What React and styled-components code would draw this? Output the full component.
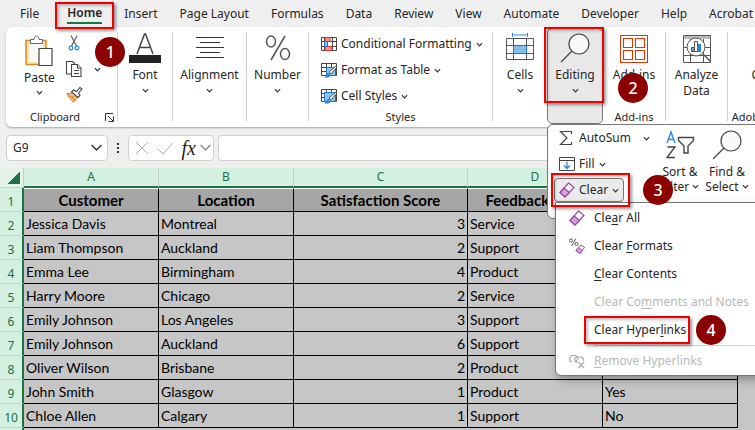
import React from "react";
import styled, { createGlobalStyle, css } from "styled-components";

const tabs = [
  "File",
  "Home",
  "Insert",
  "Page Layout",
  "Formulas",
  "Data",
  "Review",
  "View",
  "Automate",
  "Developer",
  "Help",
  "Acrobat",
];

const columns = [
  { letter: "A", title: "Customer", width: 135 },
  { letter: "B", title: "Location", width: 135 },
  { letter: "C", title: "Satisfaction Score", width: 174 },
  { letter: "D", title: "Feedback Type", width: 135 },
  { letter: "E", title: "", width: 135 },
];

const rows = [
  ["Jessica Davis", "Montreal", 3, "Service", ""],
  ["Liam Thompson", "Auckland", 2, "Support", ""],
  ["Emma Lee", "Birmingham", 4, "Product", ""],
  ["Harry Moore", "Chicago", 2, "Service", ""],
  ["Emily Johnson", "Los Angeles", 3, "Support", ""],
  ["Emily Johnson", "Auckland", 6, "Support", ""],
  ["Oliver Wilson", "Brisbane", 2, "Product", ""],
  ["John Smith", "Glasgow", 1, "Product", "Yes"],
  ["Chloe Allen", "Calgary", 1, "Support", "No"],
];

const Chevron = ({ size = 7, color = "#333" }) => (
  <svg width={size} height={size} viewBox="0 0 8 8" fill="none" stroke={color} strokeWidth={size > 8 ? 0.9 : 1.4}>
    <path d="M1 2.5 4 5.5 7 2.5" />
  </svg>
);

const PasteIcon = () => (
  <svg width="28" height="32" viewBox="0 0 28 32" fill="none">
    <path d="M1 5.5h20v24H1z" fill="#fbe3b0" stroke="#e08a2c" strokeWidth="1.6" />
    <path d="M4 8h14v19H4z" fill="#fafafa" />
    <path d="M5.500 8.500v-4h3.500c0-4.500 5-4.500 5 0h3.500v4z" fill="#fff" stroke="#666" />
    <path d="M14 13.500h13v17H14z" fill="#fff" stroke="#444" strokeWidth="1.2" />
  </svg>
);

const CutIcon = () => (
  <svg width="16" height="16" viewBox="0 0 16 16" fill="none" stroke="#555" strokeWidth="1.1">
    <path d="M5 0.500 10.500 11M11 0.500 5.500 11" />
    <circle cx="5" cy="13" r="1.800" stroke="#2b88d8" strokeWidth="1.3" />
    <circle cx="11" cy="13" r="1.800" stroke="#2b88d8" strokeWidth="1.3" />
  </svg>
);

const CopyIcon = () => (
  <svg width="18" height="18" viewBox="0 0 18 18" fill="#fff" stroke="#444" strokeWidth="1.1">
    <path d="M7 14H1.500V1.500h6L10 4" />
    <path d="M6.500 4.500h6l3.500 3.500v8.500H6.500z" />
    <path d="M12.500 4.500v3.500H16M9 10.500h5M9 13.500h5" />
  </svg>
);

const PainterIcon = () => (
  <svg width="17" height="17" viewBox="0 0 17 17" fill="none">
    <path d="M1 7.500c3 .5 4-.5 5.500-1.500l5 5C10.500 13 9.500 14.500 7.500 16 5 14 2.500 11 1 7.500z" fill="#f7c27b" stroke="#e06c1a" />
    <path d="M4 9.500 9 14M6 12l2-2" stroke="#e06c1a" />
    <path d="m5.500 6 2-2 3 1.500L14 1.500 16 3l-3.500 4L14 9.500l-2 2z" fill="#fff" stroke="#444" strokeWidth="1.1" />
  </svg>
);

const LauncherIcon = () => (
  <svg width="9" height="9" viewBox="0 0 9 9" fill="none" stroke="#333">
    <path d="M.5 8V.5H8M3 3l5 5M8.500 3.500v5h-5" />
  </svg>
);

const FontIcon = () => (
  <svg width="32" height="30" viewBox="0 0 32 30" fill="none">
    <path d="M8 21 15.500 1h1L24 21M10.700 14.500h10.600" stroke="#444" strokeWidth="1.5" />
    <path d="M0 22h32v8H0z" fill="#222" />
  </svg>
);

const AlignIcon = () => (
  <svg width="28" height="30" viewBox="0 0 28 30" stroke="#333">
    <path d="M0 4.500h28M4 9.500h20M0 14.500h28M4 19.500h20M0 24.500h28" />
  </svg>
);

const PercentIcon = () => (
  <svg width="26" height="30" viewBox="0 0 26 30" fill="none" stroke="#555" strokeWidth="1.5">
    <path d="M20 3 6 27" />
    <ellipse cx="6" cy="8.500" rx="4.500" ry="5.500" />
    <ellipse cx="20" cy="21" rx="4.500" ry="5.500" />
  </svg>
);

const ConditionalIcon = () => (
  <svg width="16" height="16" viewBox="0 0 16 16" fill="none">
    <path d="M.5 1.500h15v13H.5zM.5 5.500h15M.5 10.500h15M11.500 1.500v13M3.500 1.500v13" stroke="#444" />
    <path d="M4 1.500h5v4H4zM4 10.500h7v4H4z" fill="#ff8c8c" stroke="#e03030" />
    <path d="M3.500 5.500h3v5h-3z" fill="#8cc4f0" stroke="#1f77c9" />
  </svg>
);

const TableStyleIcon = ({ wide }) => (
  <svg width="16" height="16" viewBox="0 0 16 16" fill="none">
    <path d="M.5 1.500h15v12H.5zM.5 5.500h15M.5 9.500h5M5.500 1.500v12M10.500 1.500v4" stroke="#444" />
    <path d={wide ? "M3.500 4.500h11v9h-11z" : "M5.500 5.500h9v8h-9z"} fill="#8cc4f0" stroke="#1f77c9" />
    <path d="m8 10 7-6 1 1-6 7z" fill="#fff" stroke="#444" strokeWidth=".9" />
    <path d="M3 15.500c2 0 1.500-4 4.500-4.500l2 2c0 2-2 3-6.500 2.500z" fill="#2b88d8" />
  </svg>
);

const CellsIcon = () => (
  <svg width="28" height="30" viewBox="0 0 28 30" fill="none">
    <path d="M6.500 0v4M21.500 0v4M6.500 2h15" stroke="#2b88d8" />
    <path d="M.5 5.500h27v21H.5zM.5 12.500h27M.5 20.500h27M7.500 5.500v21M20.500 5.500v21" stroke="#555" />
    <path d="M7.500 12.500h13v8h-13z" fill="#83beec" stroke="#1f77c9" />
  </svg>
);

const SearchIcon = ({ size = 30 }) => (
  <svg width={size} height={size} viewBox="0 0 30 30" fill="none" stroke="#444" strokeWidth="1.2">
    <circle cx="19" cy="11" r="10" fill="#fafafa" />
    <path d="M12 18 1 29" />
  </svg>
);

const AddinsIcon = () => (
  <svg width="28" height="30" viewBox="0 0 28 30" fill="none" stroke="#d83b01" strokeWidth="1.1">
    <path d="M.5 2.500h27v27H.5zM3.500 5.500h9v9h-9zM15.500 5.500h9v9h-9zM3.500 17.500h9v9h-9zM15.500 17.500h9v9h-9z" />
  </svg>
);

const AnalyzeIcon = () => (
  <svg width="28" height="30" viewBox="0 0 28 30" fill="none" stroke="#555">
    <path d="M.5 2.500h27v27H.5zM.5 14.500h27M.5 22.500h27M7.500 6v23M20.500 6v23" />
    <path d="M1 3h26v3H1z" fill="#bbb" stroke="none" />
    <circle cx="13" cy="14" r="9" fill="#fff" />
    <path d="m20 21 8 8" strokeWidth="1.4" />
    <path d="M8.500 14.500h3v4h-3z" fill="#999" />
    <path d="M11.500 8.500h3v10h-3z" fill="#fff" />
    <path d="M14.500 11.500h3v7h-3z" fill="#2b88d8" stroke="#1f77c9" />
  </svg>
);

const SigmaIcon = () => (
  <svg width="16" height="16" viewBox="0 0 16 16" fill="none" stroke="#444" strokeWidth="1.2">
    <path d="M12.500 4V1.500H1.500L8 8l-6.500 6.500h11V12" />
  </svg>
);

const FillIcon = () => (
  <svg width="16" height="16" viewBox="0 0 16 16" fill="none" stroke="#444">
    <path d="M.5 1.500h15v13H.5zM.5 4.500h15" />
    <path d="M8 5.500v7M5 9.500l3 3 3-3" stroke="#2b88d8" strokeWidth="1.3" />
  </svg>
);

const EraserIcon = ({ size = 16 }) => (
  <svg width={size} height={size} viewBox="0 0 16 16" fill="#fff" stroke="#9b3fa8" strokeWidth="1.2">
    <path d="M9.500 1 15 5.500 6 15 1 10.500z" />
    <path d="M5 6 10.500 10.500 6 15 1 10.500z" fill="#d9a0e0" />
  </svg>
);

const FormatsIcon = () => (
  <svg width="16" height="16" viewBox="0 0 16 16" fill="none" stroke="#555">
    <path d="M7 0.500 2.500 8" />
    <circle cx="2" cy="2.500" r="1.600" />
    <circle cx="7.500" cy="6" r="1.600" />
    <path d="m12 7 3.500 2.500-4.500 6L7 12.500z" fill="#fff" stroke="#9b3fa8" />
    <path d="m9.500 9.500 4 3-2.500 3-4-3z" fill="#d9a0e0" stroke="#9b3fa8" />
  </svg>
);

const UnlinkIcon = () => (
  <svg width="16" height="16" viewBox="0 0 16 16" fill="none" stroke="#aaa" strokeWidth="1.200">
    <path d="M3 9C-.5 8 0 3 3.500 2.500H6c3 .5 3.500 4.500 1 6M8.500 9.500C4.500 9 5 4 8.500 4H11c2.500 0 4 2 3.500 4" />
    <path d="m9.500 9 5.500 6M15 9l-5.500 6" />
  </svg>
);

const SortIcon = () => (
  <svg width="29" height="28" viewBox="0 0 29 28" fill="none" strokeWidth="1.400">
    <path d="M1 12 5 1l4 11M2.500 8.500h5" stroke="#2b88d8" />
    <path d="M1.500 16H9L1 26.500h8" stroke="#444" />
    <path d="M12.500 6.500h15v3L22 15v7h-4v-7l-5.500-5.500z" stroke="#444" />
  </svg>
);

const CrossIcon = () => (
  <svg width="14" height="14" viewBox="0 0 14 14" stroke="#aaa">
    <path d="m1 1 12 12M13 1 1 13" />
  </svg>
);

const TickIcon = () => (
  <svg width="17" height="14" viewBox="0 0 17 14" fill="none" stroke="#aaa">
    <path d="m1 8 5 5L16 2" />
  </svg>
);

const Note = ({ step, badge, ...box }) => (
  <>
    <Outline {...box} />
    <Badge {...badge}>{step}</Badge>
  </>
);

const BigButton = ({ icon, label, chevron = true }) => (
  <Big>
    {icon}
    <span>{label}</span>
    {chevron && <Chevron />}
  </Big>
);

export default function App() {
  return (
    <Page>
      <GlobalStyle />
      <Tabs>
        {tabs.map((tab) => (
          <Tab key={tab} $active={tab === "Home"}>
            <span>{tab}</span>
            {tab === "Home" && (
              <Note step="1" $inset="2px -12px -2px" badge={{ $left: 28, $top: 37 }} />
            )}
          </Tab>
        ))}
      </Tabs>

      <Ribbon>
        <Group $width={111}>
          <Clipboard>
            <Paste>
              <PasteIcon />
              <span>Paste</span>
              <Chevron />
            </Paste>
            <ClipTools>
              <IconButton aria-label="Cut"><CutIcon /></IconButton>
              <IconButton aria-label="Copy"><CopyIcon /></IconButton>
              <IconButton aria-label="Format Painter"><PainterIcon /></IconButton>
            </ClipTools>
            <IconButton aria-label="Copy options"><Chevron /></IconButton>
          </Clipboard>
          <GroupLabel $launcher>
            <span>Clipboard</span>
            <IconButton aria-label="Clipboard settings"><LauncherIcon /></IconButton>
          </GroupLabel>
        </Group>
        <Divider />
        <Group $width={54}><BigButton icon={<FontIcon />} label="Font" /></Group>
        <Divider />
        <Group $width={73}><BigButton icon={<AlignIcon />} label="Alignment" /></Group>
        <Divider />
        <Group $width={61}><BigButton icon={<PercentIcon />} label="Number" /></Group>
        <Divider />
        <Group $width={183}>
          <StyleList>
            <RowButton><ConditionalIcon />Conditional Formatting<Chevron /></RowButton>
            <RowButton><TableStyleIcon />Format as Table<Chevron /></RowButton>
            <RowButton><TableStyleIcon wide />Cell Styles<Chevron /></RowButton>
          </StyleList>
          <GroupLabel>Styles</GroupLabel>
        </Group>
        <Divider />
        <Group $width={54}><BigButton icon={<CellsIcon />} label="Cells" /></Group>

        <Editing $width={56}>
          <BigButton icon={<SearchIcon />} label="Editing" />
          <EditPanel>
            <EditList>
              <RowButton $wide><SigmaIcon />AutoSum<Chevron /></RowButton>
              <RowButton><FillIcon />Fill<Chevron /></RowButton>
              <ClearWrap>
                <RowButton $pressed><EraserIcon />Clear<Chevron /></RowButton>
                <ClearMenu>
                  <MenuItem><EraserIcon /><span>Cle<u>a</u>r All</span></MenuItem>
                  <MenuItem><FormatsIcon /><span>Clear <u>F</u>ormats</span></MenuItem>
                  <MenuItem><i /><span><u>C</u>lear Contents</span></MenuItem>
                  <MenuItem disabled><i /><span>Clear Co<u>m</u>ments and Notes</span></MenuItem>
                  <MenuItem>
                    <i /><span>Clear Hyper<u>l</u>inks</span>
                    <Note step="4" $inset="0 auto 0 28px" $width={106} badge={{ $left: 140, $top: -1 }} />
                  </MenuItem>
                  <Rule />
                  <MenuItem disabled><UnlinkIcon /><span><u>R</u>emove Hyperlinks</span></MenuItem>
                </ClearMenu>
                <Note step="3" $inset="-4px auto auto -4px" $width={79} $height={34} badge={{ $left: 88, $top: -2 }} />
              </ClearWrap>
            </EditList>
            <StackButton $width={46}><SortIcon /><span>Sort &amp;</span><span>Filter <Chevron /></span></StackButton>
            <StackButton $width={48}><SearchIcon /><span>Find &amp;</span><span>Select <Chevron /></span></StackButton>
          </EditPanel>
          <Note step="2" $inset="-2px -2px 20px -4px" badge={{ $left: 70, $top: 44 }} />
        </Editing>

        <Group $width={62}>
          <BigButton icon={<AddinsIcon />} label="Add-ins" chevron={false} />
          <GroupLabel>Add-ins</GroupLabel>
        </Group>
        <Divider />
        <Group $width={61}><BigButton icon={<AnalyzeIcon />} label="Analyze Data" chevron={false} /></Group>
        <Divider />
        <Group $width={84}>
          <BigButton icon={<i />} label="Create" chevron={false} />
          <GroupLabel>Adobe Acrobat</GroupLabel>
        </Group>
      </Ribbon>

      <FormulaBar>
        <NameBox>
          <input aria-label="Name Box" defaultValue="G9" />
          <IconButton aria-label="Named cells"><Chevron size={13} /></IconButton>
        </NameBox>
        <Dots>
          <span />
          <span />
          <span />
        </Dots>
        <FxBox>
          <IconButton aria-label="Cancel"><CrossIcon /></IconButton>
          <IconButton aria-label="Enter"><TickIcon /></IconButton>
          <Fx><em>fx</em><Chevron size={13} color="#888" /></Fx>
        </FxBox>
        <FormulaInput aria-label="Formula" />
      </FormulaBar>

      <Sheet>
        <Grid>
          <colgroup>
            <col width="24" />
            {columns.map((col) => (
              <col key={col.letter} width={col.width} />
            ))}
            <col />
          </colgroup>
          <thead>
            <tr>
              <Corner aria-label="Select all" />
              {columns.map((col) => (
                <Letter key={col.letter} scope="col">{col.letter}</Letter>
              ))}
              <Letter scope="col" />
            </tr>
          </thead>
          <tbody>
            <tr>
              <RowNumber scope="row">1</RowNumber>
              {columns.map((col) => (
                <Cell key={col.letter} $title>{col.title}</Cell>
              ))}
            </tr>
            {rows.map((row, i) => (
              <tr key={i}>
                <RowNumber scope="row">{i + 2}</RowNumber>
                {row.map((value, j) => (
                  <Cell key={j} $number={typeof value === "number"}>{value}</Cell>
                ))}
              </tr>
            ))}
          </tbody>
        </Grid>
      </Sheet>
    </Page>
  );
}

const GlobalStyle = createGlobalStyle`
  * {
    box-sizing: border-box;
  }
  body {
    margin: 0;
    background: #efefef;
  }
  button, input {
    font: inherit;
    color: inherit;
    border: none;
    background: none;
    padding: 0;
    margin: 0;
    outline: none;
  }
  svg {
    display: block;
    flex: none;
  }
`;

const Page = styled.div`
  min-height: 100vh;
  display: flex;
  flex-direction: column;
  overflow: hidden;
  background: #efefef;
  color: #262626;
  font-family: "Noto Sans", "Open Sans", sans-serif;
  font-size: 12px;
  line-height: 16px;
`;

const Outline = styled.span`
  position: absolute;
  z-index: 3;
  inset: ${(p) => p.$inset};
  width: ${(p) => (p.$width ? `${p.$width}px` : "auto")};
  height: ${(p) => (p.$height ? `${p.$height}px` : "auto")};
  border: 2px solid #f00000;
  box-shadow: 2px 2px 3px rgba(0, 0, 0, 0.4), inset 2px 2px 3px rgba(0, 0, 0, 0.25);
  pointer-events: none;
`;

const Badge = styled.span`
  position: absolute;
  z-index: 4;
  left: ${(p) => p.$left}px;
  top: ${(p) => p.$top}px;
  width: 30px;
  height: 30px;
  border-radius: 50%;
  background: #8b0000;
  color: #fff;
  font-size: 16px;
  font-weight: 500;
  line-height: 30px;
  text-align: center;
`;

const Tabs = styled.nav`
  display: flex;
  gap: 22px;
  height: 27px;
  padding-left: 20px;
`;

const Tab = styled.button`
  position: relative;
  flex: none;
  white-space: nowrap;

  ${(p) =>
    p.$active &&
    css`
      font-weight: 600;
      margin-left: 6px;
      z-index: 2;

      > span:first-child {
        display: block;
        height: 21px;
        padding-top: 2px;
        border-bottom: 2px solid #107c41;
      }
    `}
`;

const Ribbon = styled.section`
  display: flex;
  height: 100px;
  margin-left: 6px;
  background: #fff;
  border-radius: 6px 0 0 6px;
  box-shadow: 0 1px 2px rgba(0, 0, 0, 0.3);
`;

const Group = styled.div`
  flex: none;
  width: ${(p) => p.$width}px;
  display: flex;
  flex-direction: column;
  justify-content: space-between;
  padding: 6px 0 2px;
`;

const Divider = styled.div`
  flex: none;
  width: 1px;
  margin: 5px 0 6px;
  background: #d0d0d0;
`;

const GroupLabel = styled.div`
  display: flex;
  justify-content: center;
  white-space: nowrap;
  font-size: 11px;
  ${(p) => p.$launcher && "justify-content: space-between; align-items: center; padding: 0 3px 0 24px;"}
`;

const IconButton = styled.button`
  display: flex;
  align-items: center;
  justify-content: center;
`;

const Big = styled.button`
  display: flex;
  flex-direction: column;
  align-items: center;
  width: 100%;

  > svg:first-child,
  > i {
    height: 30px;
    margin-bottom: 4px;
  }
  > svg:last-child {
    margin-top: 4px;
  }
`;

const Clipboard = styled.div`
  display: flex;
  padding: 2px 16px 0 18px;
  justify-content: space-between;
`;

const Paste = styled.button`
  display: flex;
  flex-direction: column;
  align-items: center;
  gap: 3px;
`;

const ClipTools = styled.div`
  display: flex;
  flex-direction: column;
  justify-content: space-between;
  align-items: center;
  height: 68px;
`;

const StyleList = styled.div`
  display: flex;
  flex-direction: column;
  align-items: flex-start;
  padding: 0 0 0 12px;
  margin-top: -2px;
`;

const RowButton = styled.button`
  display: flex;
  align-items: center;
  gap: 4px;
  height: 26px;
  white-space: nowrap;
  ${(p) => p.$wide && "> svg:last-child { margin-left: 8px; }"}
  ${(p) =>
    p.$pressed &&
    css`
      width: 70px;
      margin-left: -5px;
      padding-left: 4px;
      height: 24px;
      border: 1px solid #777;
      border-radius: 4px;
      background: #ebebeb;
    `}
`;

const Editing = styled(Group)`
  position: relative;
  z-index: 2;
  background: #e8e8e8;
  border: 1px solid #777;
  border-radius: 5px;
  margin: 1px 0 3px;
  padding-top: 4px;
`;

const EditPanel = styled.div`
  position: absolute;
  top: 95px;
  left: -1px;
  display: flex;
  width: 230px;
  height: 95px;
  padding-left: 11px;
  background: #fff;
  border: 1px solid #777;
  border-radius: 6px;
`;

const EditList = styled.div`
  flex: none;
  display: flex;
  flex-direction: column;
  align-items: flex-start;
  width: 98px;
`;

const ClearWrap = styled.div`
  position: relative;
  padding-top: 1px;

  > span {
    margin-left: -4px;
  }
`;

const ClearMenu = styled.div`
  position: absolute;
  z-index: 2;
  top: 25px;
  left: -4px;
  width: 230px;
  padding-top: 1px;
  background: #fff;
  border: 1px solid #777;
  border-radius: 0 0 6px 6px;
  box-shadow: 2px 4px 8px rgba(0, 0, 0, 0.3);
`;

const MenuItem = styled.button`
  position: relative;
  display: flex;
  align-items: center;
  gap: 9px;
  width: 100%;
  height: 28px;
  padding-left: 13px;
  text-align: left;

  > i {
    width: 16px;
  }
  u {
    text-underline-offset: 2px;
  }
  &:disabled {
    color: #b8b8b8;
  }
`;

const Rule = styled.div`
  height: 1px;
  margin: 1px 0 1px 38px;
  background: #d0d0d0;
`;

const StackButton = styled.button`
  flex: none;
  display: flex;
  flex-direction: column;
  align-items: center;
  align-self: flex-start;
  width: ${(p) => p.$width}px;
  padding-top: 5px;
  line-height: 15px;
  white-space: nowrap;

  > svg {
    height: 30px;
    margin-bottom: 4px;
  }
  span {
    display: flex;
    align-items: center;
    gap: 3px;
  }
`;

const FormulaBar = styled.section`
  display: flex;
  align-items: center;
  height: 41px;
  padding-left: 6px;
`;

const fieldStyle = css`
  height: 26px;
  background: #fff;
  border: 1px solid #d0d0d0;
  border-radius: 4px;
`;

const NameBox = styled.div`
  ${fieldStyle}
  display: flex;
  justify-content: space-between;
  width: 102px;
  padding: 0 4px 0 6px;

  input {
    width: 60px;
  }
`;

const Dots = styled.div`
  display: flex;
  flex-direction: column;
  align-items: center;
  gap: 2px;
  width: 20px;

  span {
    width: 2px;
    height: 2px;
    background: #333;
  }
`;

const FxBox = styled.div`
  ${fieldStyle}
  display: flex;
  justify-content: space-between;
  width: 86px;
  padding: 0 1px 0 6px;
  margin-right: 4px;
`;

const Fx = styled.button`
  display: flex;
  align-items: center;
  gap: 3px;
  font-family: "Liberation Serif", serif;
  font-size: 20px;
`;

const FormulaInput = styled.input`
  && {
    ${fieldStyle}
    border-radius: 4px 0 0 4px;
    border-right: none;
    flex: 1;
    min-width: 0;
  }
`;

const Sheet = styled.main`
  flex: 1;
  background: linear-gradient(to right, #d3f0e0 22px, #1e7145 22px 24px, #c6c6c6 24px);
`;

const Grid = styled.table`
  width: 100%;
  table-layout: fixed;
  border-collapse: separate;
  border-spacing: 0;
`;

const Letter = styled.th`
  height: 20px;
  padding: 0;
  background: #d3f0e0;
  border-right: 1px solid #c4cfc9;
  border-bottom: 2px solid #1e7145;
  color: #1e7145;
  font-weight: 400;
`;

const Corner = styled.th`
  padding: 0;
  background: linear-gradient(135deg, transparent 50%, #1e7145 50%) 8px 4px / 12px 12px no-repeat #e4f3ea;
  border-right: 1px solid #c4cfc9;
  border-bottom: 1px solid #c4cfc9;
`;

const RowNumber = styled.th`
  height: 24px;
  padding: 4px 0 0;
  background: #d3f0e0;
  border-right: 2px solid #1e7145;
  border-bottom: 1px solid #c4cfc9;
  color: #1e7145;
  font-weight: 400;
`;

const Cell = styled.td`
  height: 24px;
  padding: 0 2px;
  background: ${(p) => (p.$title ? "#a6a6a6" : "#c6c6c6")};
  border-right: 1px solid #000;
  border-bottom: 1px solid #000;
  color: #000;
  font-family: Lato, sans-serif;
  font-size: 14px;
  white-space: nowrap;
  text-align: ${(p) => (p.$title ? "center" : p.$number ? "right" : "left")};
  ${(p) => p.$title && "font-size: 15px; font-weight: 700; border-top: 1px solid #fff;"}
`;
